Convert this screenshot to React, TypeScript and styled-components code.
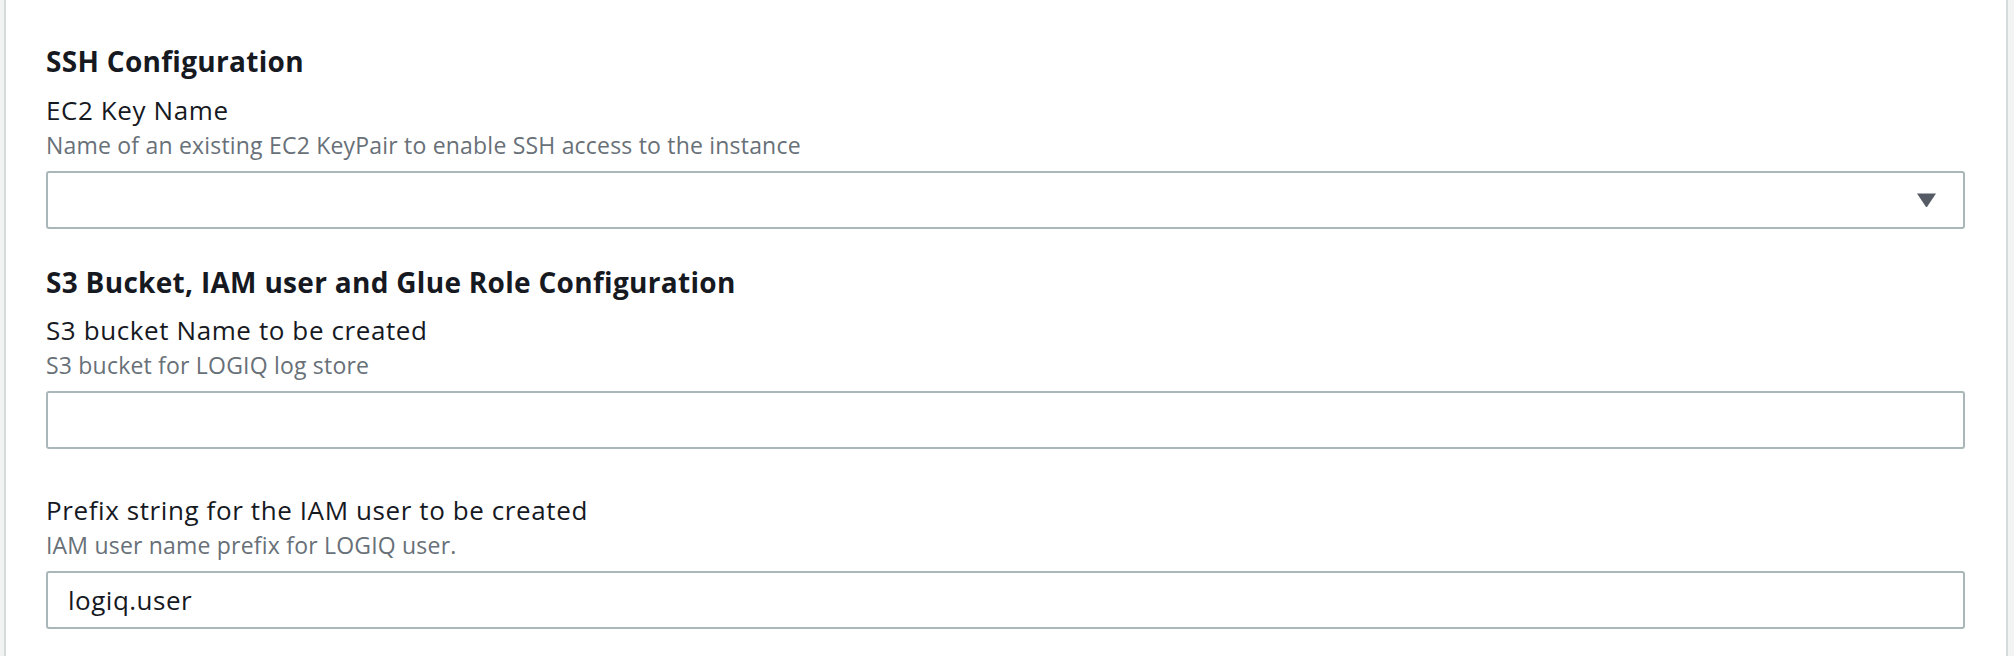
import React from "react";
import styled, { createGlobalStyle } from "styled-components";

const GlobalStyle = createGlobalStyle`
  html, body {
    margin: 0;
    padding: 0;
    background: #f2f3f3;
  }
  body {
    font-family: "Open Sans", "Noto Sans", Arial, sans-serif;
    color: #16191f;
  }
  * { box-sizing: border-box; }
`;

const Page = styled.div`
  display: flex;
  padding: 0 6px 0 4px;
  height: 656px;
  overflow: hidden;
`;

const Panel = styled.div`
  flex: 1;
  background: #ffffff;
  border-left: 2px solid #d5dbdb;
  border-right: 2px solid #d5dbdb;
  padding: 43px 41px 0 40px;
  display: flex;
  flex-direction: column;
`;

const Section = styled.section<{ $gapTop?: number }>`
  display: flex;
  flex-direction: column;
  margin-top: ${(p) => p.$gapTop ?? 0}px;
`;

const Heading = styled.h3`
  margin: 0;
  font-size: 28px;
  line-height: 36px;
  font-weight: 700;
  letter-spacing: 0.3px;
  color: #16191f;
`;

const Field = styled.div<{ $gapTop: number }>`
  display: flex;
  flex-direction: column;
  margin-top: ${(p) => p.$gapTop}px;
`;

const Label = styled.label`
  font-size: 26px;
  line-height: 34px;
  font-weight: 400;
  letter-spacing: 0.6px;
  color: #16191f;
`;

const Description = styled.div`
  margin-top: 3px;
  font-size: 23px;
  line-height: 30px;
  letter-spacing: 0.2px;
  color: #687078;
`;

const Control = styled.div`
  margin-top: 11px;
  height: 58px;
  border: 2px solid #aab7b8;
  border-radius: 3px;
  background: #ffffff;
  display: flex;
  align-items: center;
  padding: 0 26px 0 20px;
`;

const Value = styled.span`
  flex: 1;
  font-size: 26px;
  line-height: 34px;
  letter-spacing: 0.5px;
  color: #16191f;
`;

const Caret = styled.svg`
  width: 21px;
  height: 16px;
  flex: none;
`;

const SelectCaret = () => (
  <Caret viewBox="0 0 21 16">
    <path d="M1 1.5 L20 1.5 L11.3 14.6 Q10.5 15.6 9.7 14.6 Z" fill="#545b64" />
  </Caret>
);

export default function App() {
  return (
    <>
      <GlobalStyle />
      <Page>
        <Panel>
          <Section>
            <Heading>SSH Configuration</Heading>
            <Field $gapTop={14}>
              <Label>EC2 Key Name</Label>
              <Description>Name of an existing EC2 KeyPair to enable SSH access to the instance</Description>
              <Control>
                <Value />
                <SelectCaret />
              </Control>
            </Field>
          </Section>
          <Section $gapTop={35}>
            <Heading>S3 Bucket, IAM user and Glue Role Configuration</Heading>
            <Field $gapTop={13}>
              <Label>S3 bucket Name to be created</Label>
              <Description>S3 bucket for LOGIQ log store</Description>
              <Control>
                <Value />
              </Control>
            </Field>
            <Field $gapTop={44}>
              <Label>Prefix string for the IAM user to be created</Label>
              <Description>IAM user name prefix for LOGIQ user.</Description>
              <Control>
                <Value>logiq.user</Value>
              </Control>
            </Field>
          </Section>
        </Panel>
      </Page>
    </>
  );
}
